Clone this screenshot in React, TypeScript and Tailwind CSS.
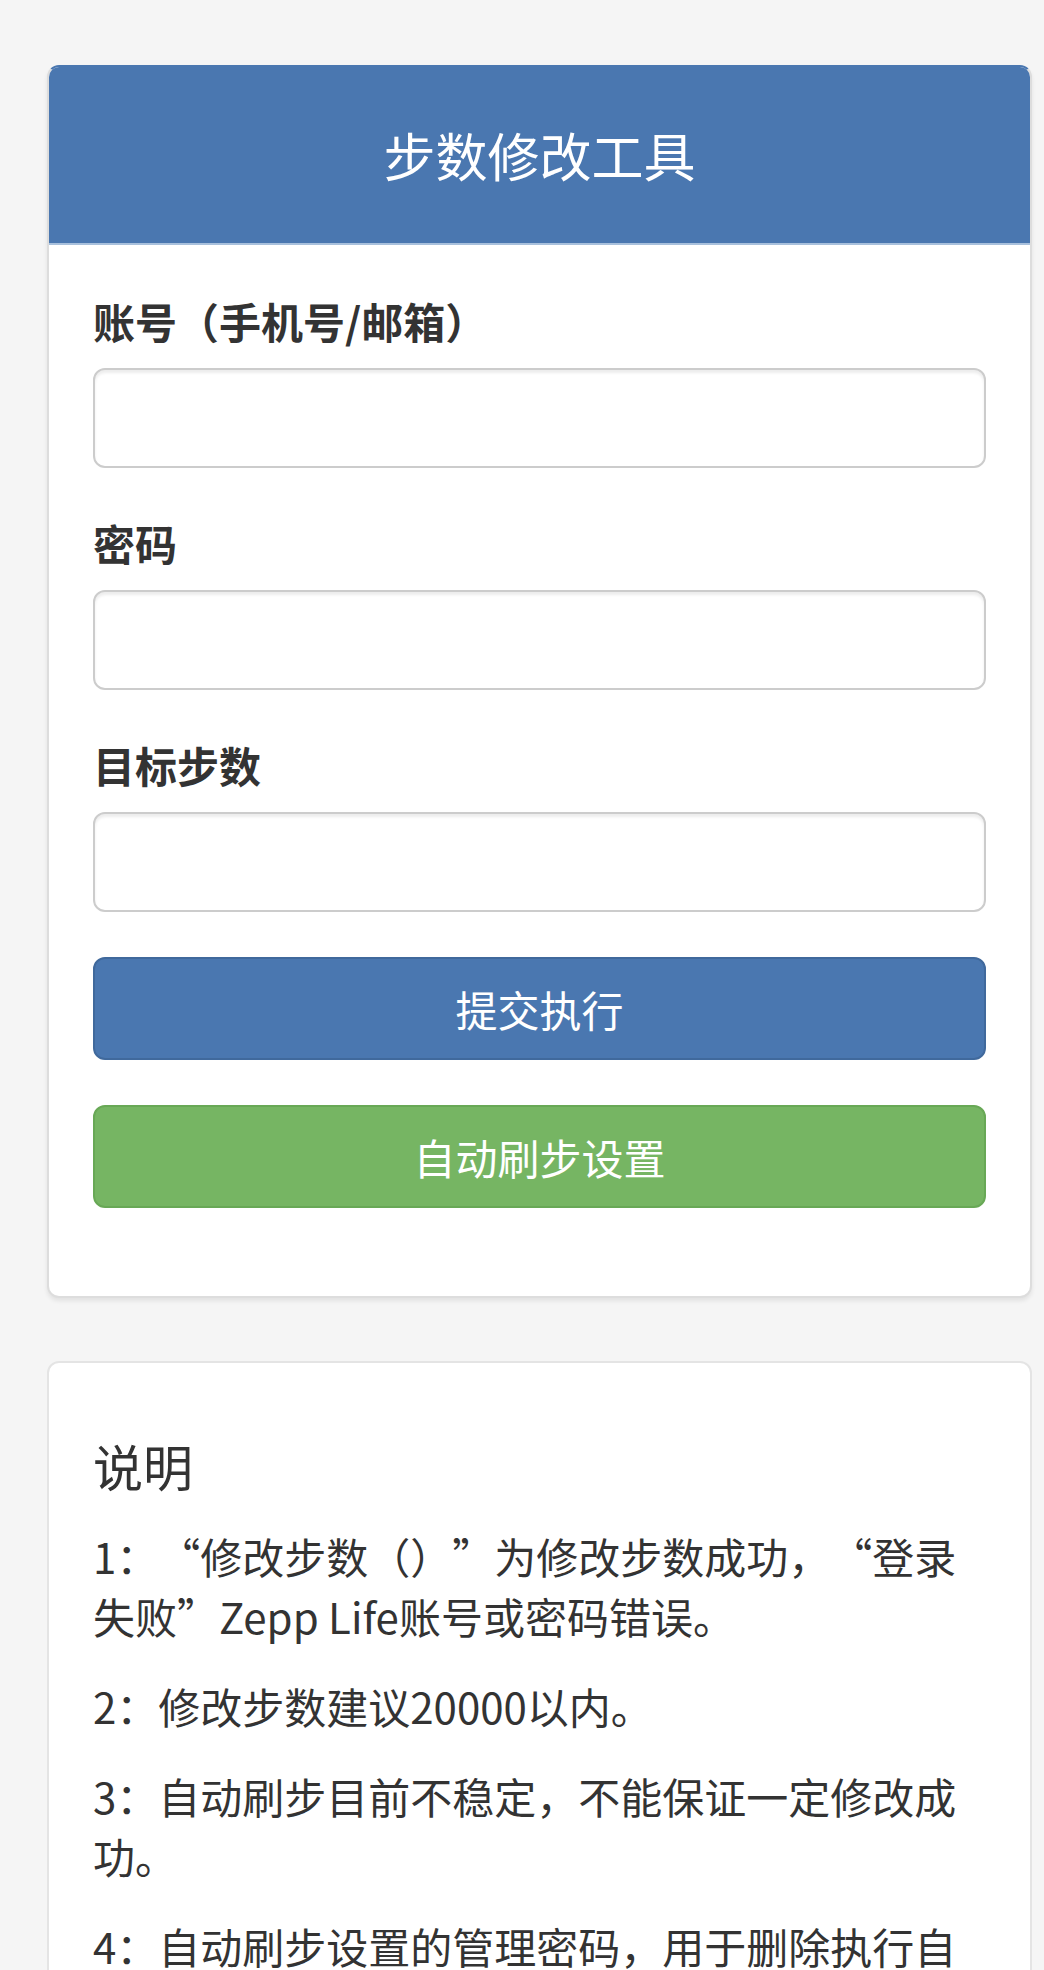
const fields = [
  { label: "账号（手机号/邮箱）", type: "text" },
  { label: "密码", type: "password" },
  { label: "目标步数", type: "number" },
];

const notes = [
  "1：“修改步数（）”为修改步数成功，“登录失败”Zepp Life账号或密码错误。",
  "2：修改步数建议20000以内。",
  "3：自动刷步目前不稳定，不能保证一定修改成功。",
  "4：自动刷步设置的管理密码，用于删除执行自动刷步的任务。",
];

export default function App() {
  return (
    <div
      lang="zh-CN"
      className="min-h-screen bg-[#f5f5f5] pt-[65px] pl-[47px] pr-[12px] pb-[60px] text-[#333] [text-spacing-trim:space-all]"
      style={{ fontFamily: '"Noto Sans CJK SC", "Liberation Sans", sans-serif' }}
    >
      {/* Form panel */}
      <div className="rounded-[12px] border-2 border-[#dddddd] border-t-[#4a77b0] bg-white overflow-hidden shadow-[0_3px_4px_rgba(0,0,0,0.08)]">
        <div className="h-[178px] bg-[#4a77b0] border-b-2 border-[#a8c0dc] flex items-center justify-center">
          <h1 className="text-[52px] leading-none font-normal text-white">步数修改工具</h1>
        </div>
        <form className="px-[44px] pt-[46px] pb-[88px]" onSubmit={(e) => e.preventDefault()}>
          {fields.map((f) => (
            <div key={f.label} className="mb-[45px]">
              <label className="block text-[42px] leading-[60px] font-bold mb-[17px]">{f.label}</label>
              <input
                type={f.type}
                className="block w-full h-[100px] rounded-[12px] border-2 border-[#cccccc] bg-white px-[36px] text-[42px] shadow-[inset_0_3px_3px_rgba(0,0,0,0.075)] outline-none"
              />
            </div>
          ))}
          <button
            type="submit"
            className="block w-full h-[103px] rounded-[12px] border-2 border-[#40699c] bg-[#4a77b0] text-[42px] text-white"
          >
            提交执行
          </button>
          <button
            type="button"
            className="block w-full h-[103px] mt-[45px] rounded-[12px] border-2 border-[#68a856] bg-[#76b563] text-[42px] text-white"
          >
            自动刷步设置
          </button>
        </form>
      </div>

      {/* Notes panel */}
      <div className="mt-[63px] rounded-[12px] border-2 border-[#e4e4e4] bg-white px-[44px] pt-[74px] pb-[60px]">
        <h3 className="text-[50px] leading-[56px] font-normal mb-[33px]">说明</h3>
        {notes.map((n) => (
          <p key={n} className="text-[42px] leading-[60px] mb-[30px]">
            {n}
          </p>
        ))}
      </div>
    </div>
  );
}
